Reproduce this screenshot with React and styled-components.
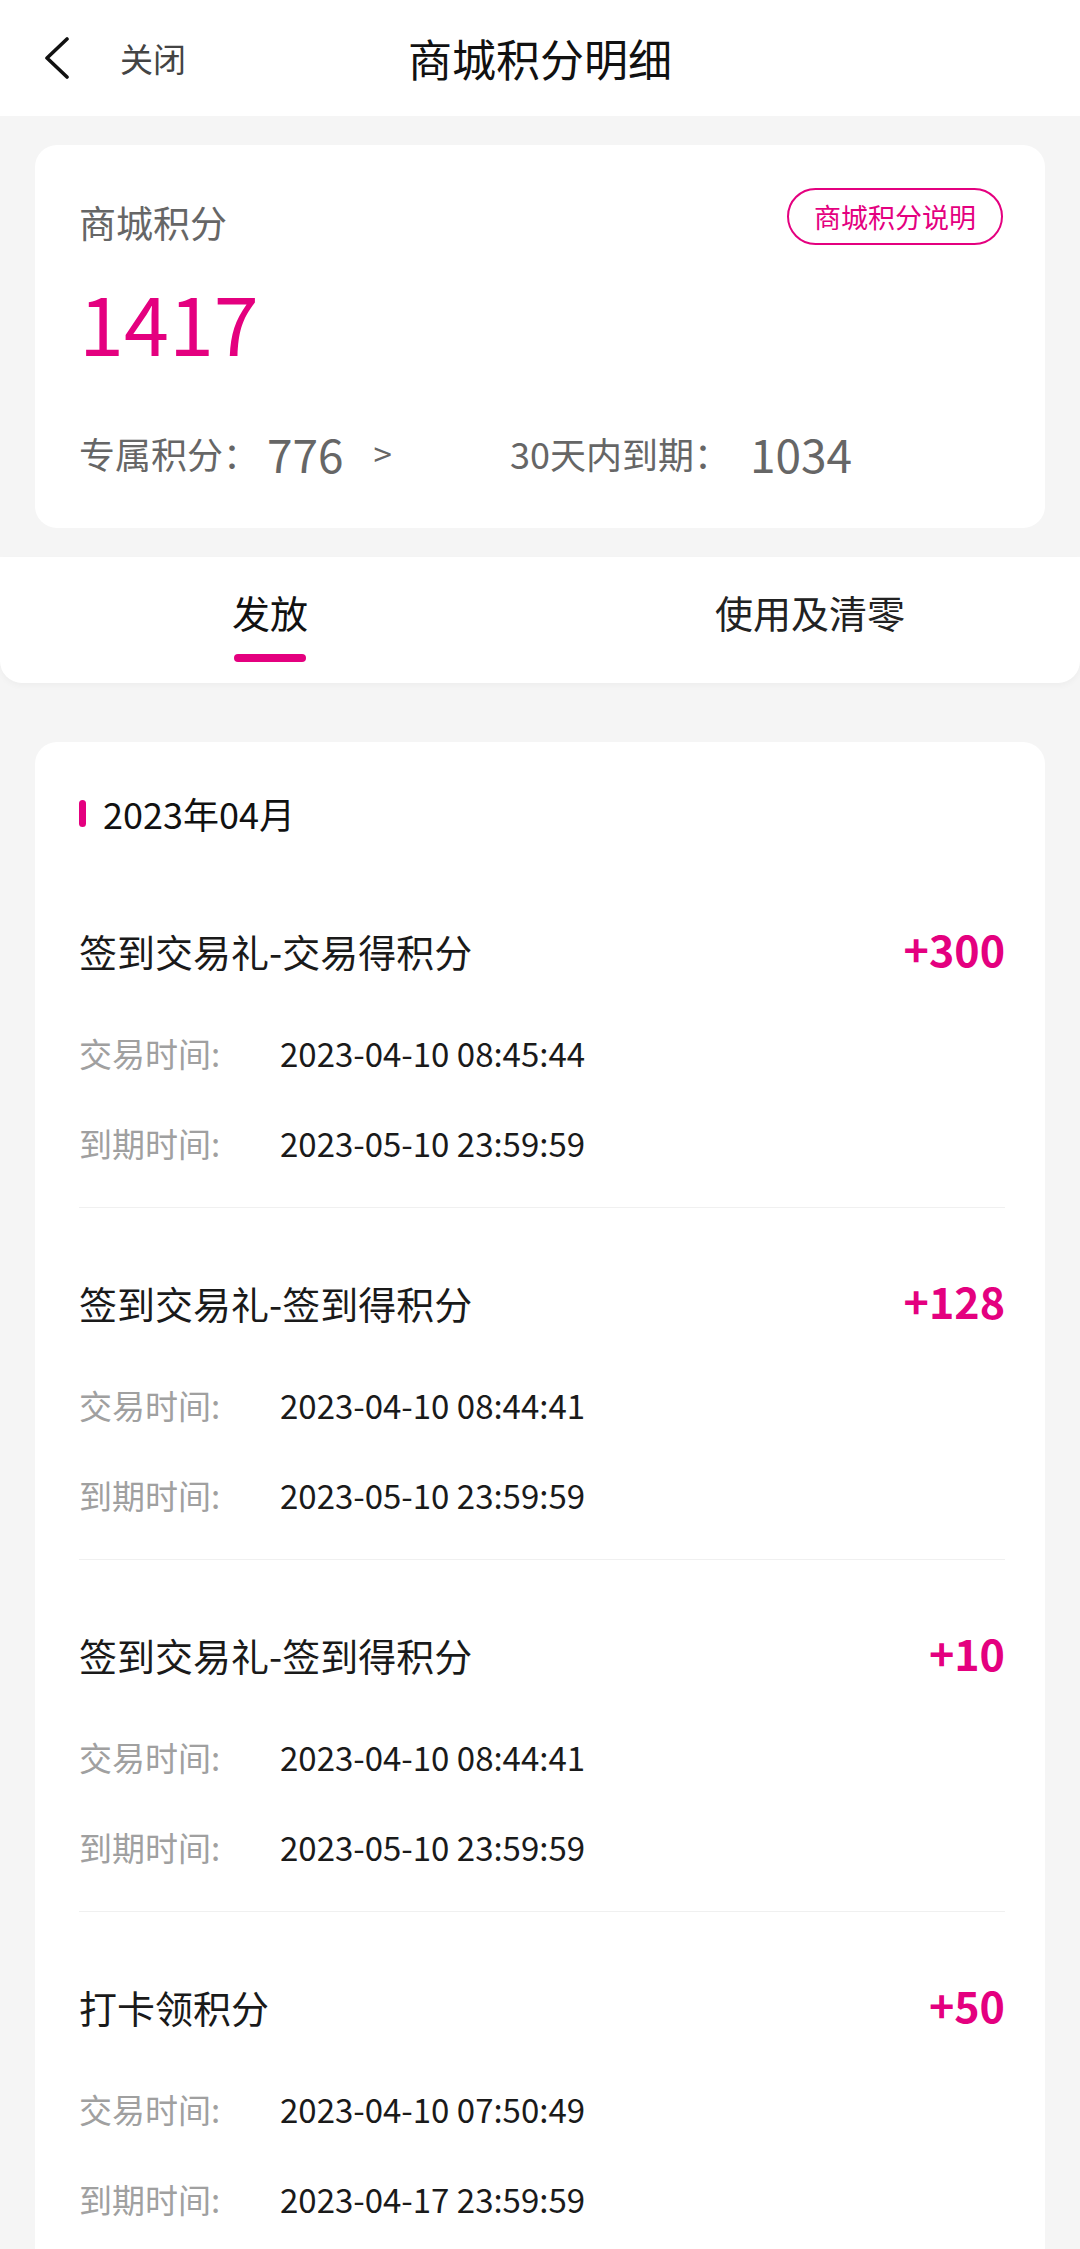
import React from "react";
import styled, { createGlobalStyle } from "styled-components";

const PINK = "#e4007f";

const GlobalStyle = createGlobalStyle`
  html, body {
    margin: 0;
    padding: 0;
    background: #f5f5f5;
    font-family: "Noto Sans CJK SC", "Noto Sans", sans-serif;
  }
`;

const Page = styled.div`
  width: 1080px;
  min-height: 2249px;
  background: #f5f5f5;
  overflow: hidden;
`;

const Header = styled.div`
  height: 116px;
  background: #fff;
  display: grid;
  grid-template-columns: 1fr auto 1fr;
  align-items: center;
`;

const BackBox = styled.div`
  display: flex;
  align-items: center;
  padding-left: 44px;
`;

const CloseText = styled.span`
  font-size: 33px;
  color: #444;
  margin-left: 50px;
`;

const Title = styled.div`
  font-size: 44px;
  color: #111;
`;

const PointsCard = styled.div`
  margin: 29px 35px 0;
  background: #fff;
  border-radius: 22px;
  padding: 43px 42px 0 44px;
  height: 383px;
  box-sizing: border-box;
`;

const TopRow = styled.div`
  display: flex;
  justify-content: space-between;
  align-items: flex-start;
`;

const Label = styled.div`
  font-size: 37px;
  line-height: 56px;
  margin-top: 6px;
  color: #666;
`;

const ExplainBtn = styled.div`
  height: 57px;
  box-sizing: border-box;
  border: 2px solid ${PINK};
  border-radius: 29px;
  padding: 0 25px;
  display: flex;
  align-items: center;
  font-size: 27px;
  color: ${PINK};
`;

const Total = styled.div`
  font-size: 81px;
  line-height: 100px;
  color: ${PINK};
  margin-top: 21px;
`;

const SubRow = styled.div`
  display: grid;
  grid-template-columns: 431px auto;
  align-items: center;
  margin-top: 49px;
  height: 60px;
`;

const SubItem = styled.div`
  display: flex;
  align-items: center;
  color: #666;
  font-size: 36px;
`;

const SubValue = styled.span`
  font-size: 46px;
  margin-left: ${(p) => p.$gap}px;
`;

const Arrow = styled.span`
  font-size: 33px;
  margin-left: 30px;
`;

const Tabs = styled.div`
  margin-top: 29px;
  height: 126px;
  background: #fff;
  border-radius: 0 0 22px 22px;
  box-shadow: 0 3px 6px rgba(0, 0, 0, 0.03);
  display: grid;
  grid-template-columns: 1fr 1fr;
`;

const Tab = styled.div`
  display: flex;
  flex-direction: column;
  align-items: center;
  padding-top: 29px;
  font-size: 38px;
  line-height: 52px;
  color: ${(p) => (p.$active ? "#111" : "#222")};
`;

const Indicator = styled.div`
  width: 72px;
  height: 8px;
  border-radius: 4px;
  background: ${PINK};
  margin-top: 16px;
`;

const ListCard = styled.div`
  margin: 59px 35px 0;
  background: #fff;
  border-radius: 22px 22px 0 0;
  padding: 46px 40px 40px 44px;
`;

const Month = styled.div`
  display: flex;
  align-items: center;
  height: 50px;
  font-size: 36px;
  color: #111;
`;

const MonthBar = styled.span`
  width: 7px;
  height: 27px;
  border-radius: 4px;
  background: ${PINK};
  margin-right: 17px;
`;

const Item = styled.div`
  padding: ${(p) => (p.$first ? 18 + 66 : 66)}px 0 39px;
  border-bottom: 1px solid #f0f0f0;
`;

const ItemHead = styled.div`
  display: flex;
  justify-content: space-between;
  align-items: center;
  height: 56px;
  margin-bottom: 50px;
`;

const ItemName = styled.div`
  font-size: 38px;
  color: #1a1a1a;
`;

const Amount = styled.div`
  font-size: 43px;
  font-weight: 700;
  color: ${PINK};
  margin-top: -4px;
`;

const InfoRow = styled.div`
  display: flex;
  align-items: center;
  height: 50px;
  font-size: 33px;
  & + & {
    margin-top: 40px;
  }
`;

const InfoLabel = styled.span`
  width: 201px;
  color: #a0a0a0;
`;

const InfoValue = styled.span`
  color: #1a1a1a;
`;

const records = [
  { name: "签到交易礼-交易得积分", amount: "+300", time: "2023-04-10 08:45:44", expire: "2023-05-10 23:59:59" },
  { name: "签到交易礼-签到得积分", amount: "+128", time: "2023-04-10 08:44:41", expire: "2023-05-10 23:59:59" },
  { name: "签到交易礼-签到得积分", amount: "+10", time: "2023-04-10 08:44:41", expire: "2023-05-10 23:59:59" },
  { name: "打卡领积分", amount: "+50", time: "2023-04-10 07:50:49", expire: "2023-04-17 23:59:59" },
];

export default function App() {
  return (
    <Page>
      <GlobalStyle />
      <Header>
        <BackBox>
          <svg width="26" height="42" viewBox="0 0 26 42">
            <polyline points="23,2 3,21 23,40" fill="none" stroke="#111" strokeWidth="3.6" strokeLinecap="round" strokeLinejoin="round" />
          </svg>
          <CloseText>关闭</CloseText>
        </BackBox>
        <Title>商城积分明细</Title>
        <div />
      </Header>

      <PointsCard>
        <TopRow>
          <Label>商城积分</Label>
          <ExplainBtn>商城积分说明</ExplainBtn>
        </TopRow>
        <Total>1417</Total>
        <SubRow>
          <SubItem>
            专属积分：<SubValue $gap={8}>776</SubValue>
            <Arrow>&gt;</Arrow>
          </SubItem>
          <SubItem>
            30天内到期：<SubValue $gap={20}>1034</SubValue>
          </SubItem>
        </SubRow>
      </PointsCard>

      <Tabs>
        <Tab $active>
          发放
          <Indicator />
        </Tab>
        <Tab>使用及清零</Tab>
      </Tabs>

      <ListCard>
        <Month>
          <MonthBar />
          2023年04月
        </Month>
        {records.map((r, i) => (
          <Item key={i} $first={i === 0}>
            <ItemHead>
              <ItemName>{r.name}</ItemName>
              <Amount>{r.amount}</Amount>
            </ItemHead>
            <InfoRow>
              <InfoLabel>交易时间:</InfoLabel>
              <InfoValue>{r.time}</InfoValue>
            </InfoRow>
            <InfoRow>
              <InfoLabel>到期时间:</InfoLabel>
              <InfoValue>{r.expire}</InfoValue>
            </InfoRow>
          </Item>
        ))}
      </ListCard>
    </Page>
  );
}
